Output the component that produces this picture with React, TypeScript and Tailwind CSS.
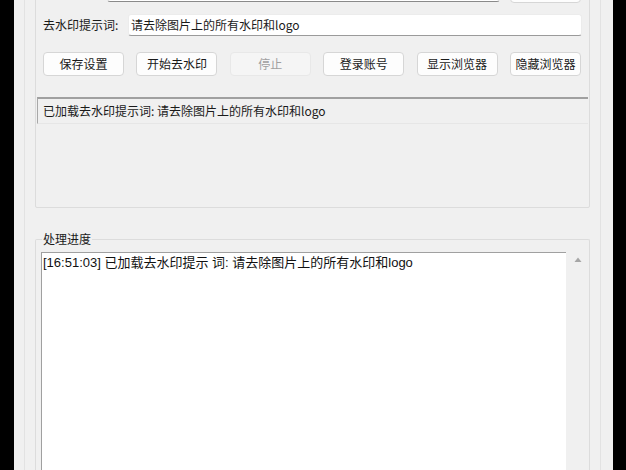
import React from "react";

const ui = { fontFamily: '"Noto Sans CJK SC", "Liberation Sans", sans-serif' };
const logFont = { fontFamily: '"Liberation Sans", "Noto Sans CJK SC", sans-serif' };

function Btn({ children, disabled }: { children: React.ReactNode; disabled?: boolean }) {
  return (
    <div
      className={
        "w-[81px] h-[24px] rounded-[4px] border flex items-center justify-center text-[12px] leading-none " +
        (disabled
          ? "bg-[#f5f5f5] border-[#e8e8e8] text-[#a0a0a0]"
          : "bg-[#fdfdfd] border-[#d6d6d6] text-[#1a1a1a]")
      }
    >
      {children}
    </div>
  );
}

export default function App() {
  return (
    <div className="w-[626px] h-[470px] bg-black flex overflow-hidden" style={ui}>
      <div className="ml-[14px] w-[599px] h-full bg-[#f0f0f0] pl-[10px] pr-[12px] flex">
        <div className="flex-1 border-x border-[#e2e2e2] px-[10px] flex flex-col">
          {/* settings group */}
          <div className="-mt-[30px] border border-[#dcdcdc] rounded-[2px] px-[7px] pt-[8px] pb-[83px] flex flex-col">
            <div className="h-[24px] flex items-center">
              <div className="ml-[64px] w-[393px] h-[22px] bg-white border border-[#e5e5e5] border-b-[#8a8a8a] rounded-[3px]" />
              <div className="ml-[10px] w-[71px] h-[24px] bg-[#fdfdfd] border border-[#d6d6d6] rounded-[4px]" />
            </div>
            <div className="mt-[11px] h-[22px] flex items-center">
              <div className="w-[85px] text-[12px] leading-none text-[#1a1a1a]">去水印提示词:</div>
              <div className="flex-1 h-[22px] bg-white border border-[#ececec] border-b-[#9a9a9a] rounded-[3px] flex items-center pl-[2px] text-[12px] leading-none text-[#1a1a1a]">
                请去除图片上的所有水印和logo
              </div>
            </div>
            <div className="mt-[16px] flex items-center justify-between pr-[1px]">
              <Btn>保存设置</Btn>
              <Btn>开始去水印</Btn>
              <Btn disabled>停止</Btn>
              <Btn>登录账号</Btn>
              <Btn>显示浏览器</Btn>
              <div className="w-[71px] h-[24px] rounded-[4px] border bg-[#fdfdfd] border-[#d6d6d6] text-[#1a1a1a] flex items-center justify-center text-[12px] leading-none">
                隐藏浏览器
              </div>
            </div>
            <div className="mt-[21px] -mx-[6px] h-[27px] border-t-2 border-l border-t-[#a0a0a0] border-l-[#a8a8a8] border-b border-b-[#e6e6e6] flex items-center pl-[5px] text-[12px] leading-none text-[#1a1a1a]">
              已加载去水印提示词: 请去除图片上的所有水印和logo
            </div>
          </div>
          {/* progress group */}
          <div className="mt-[31px] flex-1 relative border border-b-0 border-[#dcdcdc] rounded-t-[2px] pl-[5px] pt-[12px] flex">
            <div className="absolute left-[6px] -top-[9px] px-[1px] bg-[#f0f0f0] text-[12px] leading-[16px] text-[#1a1a1a]">
              处理进度
            </div>
            <div className="flex-1 flex">
              <div className="flex-1 bg-white border-t border-l border-[#a0a0a0] pl-[1px] pt-[2px] text-[13px] leading-[16px] text-[#111]" style={logFont}>
                [16:51:03] 已加载去水印提示 词: 请去除图片上的所有水印和logo
              </div>
              <div className="w-[23px] bg-[#f0f0f0] flex justify-center pt-[5px]">
                <svg width="8" height="6" viewBox="0 0 8 6">
                  <polygon points="4,0.5 7.5,5 0.5,5" fill="#a6a6a6" />
                </svg>
              </div>
            </div>
          </div>
        </div>
      </div>
    </div>
  );
}
